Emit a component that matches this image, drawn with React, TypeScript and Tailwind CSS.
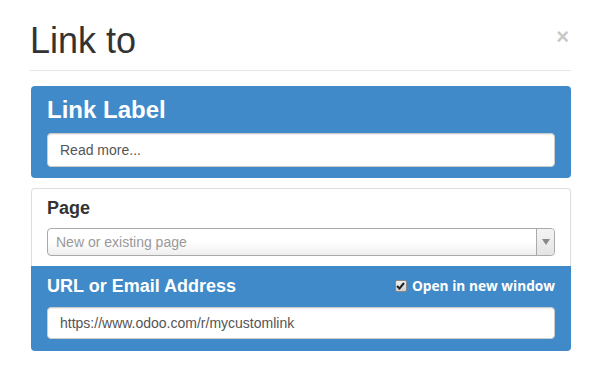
import React from "react";

export default function App() {
  return (
    <div className="w-[600px] h-[380px] bg-white px-[30px] font-['Liberation_Sans',Arial,sans-serif] text-[#333]">
      <div className="flex items-start justify-between pt-[21px]">
        <h1 className="text-[36px] leading-[40px] font-normal text-[#333]">Link to</h1>
        <span className="mt-[5px] mr-[1px] text-[22px] leading-[22px] font-bold text-[#c8c8c8]">×</span>
      </div>
      <div className="mt-[9px] h-px bg-[#e5e5e5] w-[541px]" />
      <div className="mt-[15px] ml-px w-[540px] rounded-[4px] bg-[#408ac9] px-[16px] pt-[11px] pb-[11px]">
        <div className="text-[24px] leading-[26px] font-bold text-white">Link Label</div>
        <div className="mt-[10px] h-[34px] rounded-[4px] border border-[#ccc] bg-white shadow-[inset_0_1px_1px_rgba(0,0,0,0.075)] flex items-center px-[12px] text-[14px] text-[#555]">
          Read more...
        </div>
      </div>
      <div className="mt-[10px] ml-px w-[540px]">
        <div className="rounded-t-[4px] border border-b-0 border-[#ddd] px-[15px] pt-[9px] pb-[10px]">
          <div className="text-[18px] leading-[20px] font-bold text-[#333]">Page</div>
          <div className="mt-[10px] h-[28px] rounded-[4px] border border-[#aaa] bg-[linear-gradient(to_bottom,#ffffff_50%,#eeeeee_100%)] flex items-stretch">
            <div className="flex-1 flex items-center px-[8px] text-[14px] text-[#999]">New or existing page</div>
            <div className="w-[18px] border-l border-[#aaa] rounded-r-[4px] bg-[linear-gradient(to_bottom,#f4f4f4,#e4e4e4)] flex items-center justify-center">
              <svg width="8" height="6" viewBox="0 0 8 6">
                <path d="M0 0 H8 L4 6 Z" fill="#888" />
              </svg>
            </div>
          </div>
        </div>
        <div className="rounded-b-[4px] bg-[#408ac9] px-[16px] pt-[10px] pb-[12px]">
          <div className="flex items-center justify-between">
            <div className="text-[18px] leading-[20px] font-bold text-white">URL or Email Address</div>
            <label className="flex items-center gap-[5px] font-['Open_Sans',sans-serif] text-[13.7px] font-bold text-white leading-[20px]">
              <span className="w-[12px] h-[12px] rounded-[2px] border border-[#888] bg-[linear-gradient(to_bottom,#f0f0f0,#cfcfcf)] flex items-center justify-center">
                <svg width="9" height="8" viewBox="0 0 9 8">
                  <path d="M1 4 L3.5 6.5 L8 1" stroke="#222" strokeWidth="2" fill="none" />
                </svg>
              </span>
              Open in new window
            </label>
          </div>
          <div className="mt-[11px] h-[32px] rounded-[4px] border border-[#ccc] bg-white shadow-[inset_0_1px_1px_rgba(0,0,0,0.075)] flex items-center px-[12px] text-[14px] text-[#555]">
            https://www.odoo.com/r/mycustomlink
          </div>
        </div>
      </div>
    </div>
  );
}
